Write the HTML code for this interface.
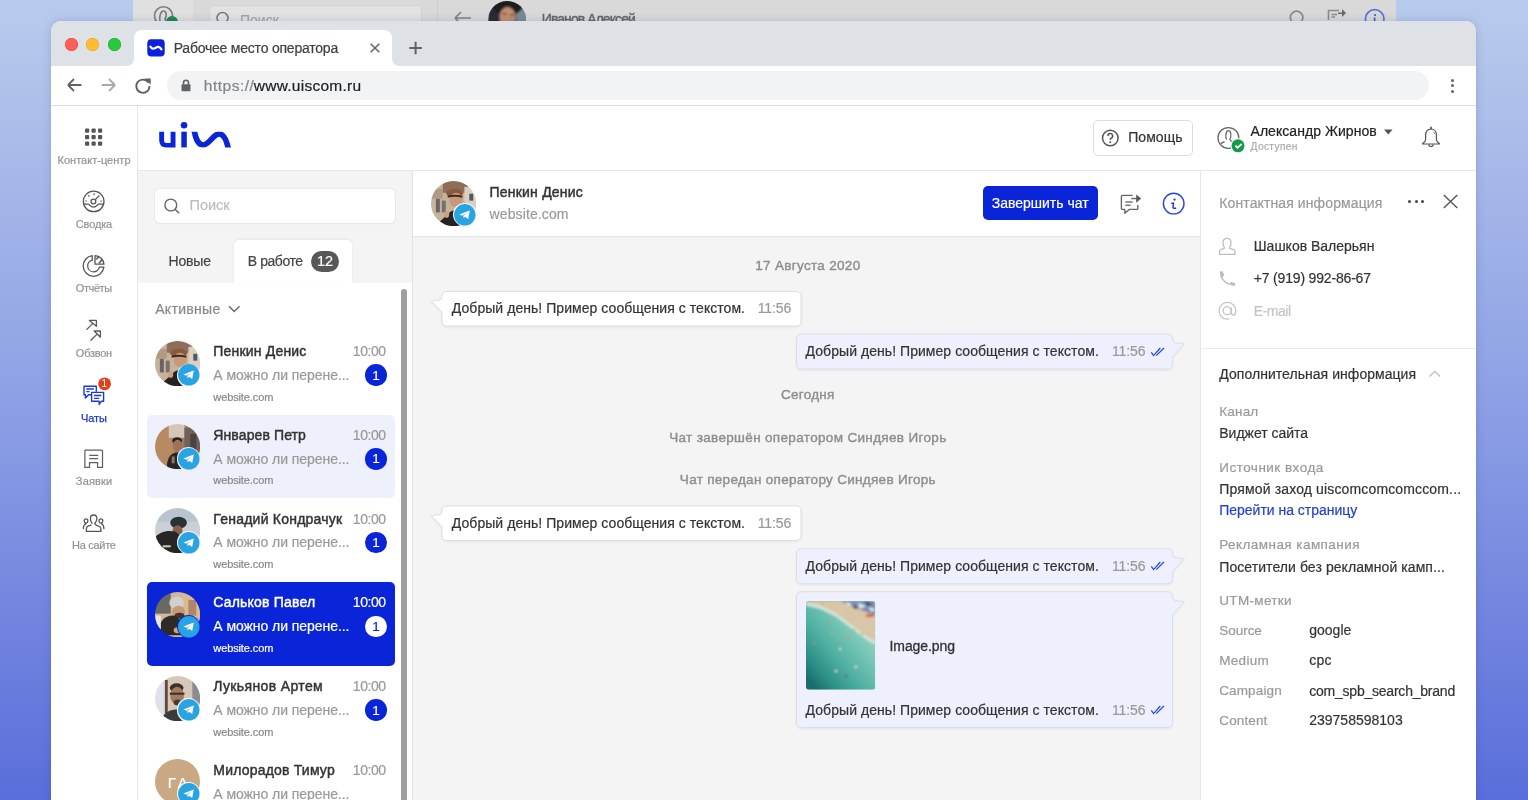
<!DOCTYPE html>
<html><head><meta charset="utf-8">
<style>
*{box-sizing:border-box;margin:0;padding:0}
html,body{width:1528px;height:800px;overflow:hidden}
body{font-family:"Liberation Sans",sans-serif;position:relative;background:#8ea3e6}
.a{position:absolute}
.t{position:absolute;white-space:nowrap;line-height:1;-webkit-text-stroke:0.2px currentColor}
</style></head><body>
<div id="root" style="position:absolute;left:0;top:0;width:1528px;height:800px;will-change:transform">
<div class="a" style="left:0px;top:0px;width:1528px;height:800px;background:linear-gradient(180deg,#b9cbec 0%,#8b9ee4 52%,#5a6edb 100%)"></div>
<div class="a" style="left:133px;top:-10px;width:1263px;height:40px;background:#d9d9d9"></div>
<div class="a" style="left:133px;top:-10px;width:60px;height:40px;background:#e0e0e0"></div>
<div class="a" style="left:209px;top:5px;width:213px;height:30px;background:#e2e2e2;border:1px solid #d2d2d2;border-radius:4px"></div>
<div class="a" style="left:437px;top:0px;width:1px;height:30px;background:#cdcdcd"></div>
<svg class="a" style="left:150px;top:3px;" width="30" height="22" viewBox="0 0 30 22"><circle cx="13.5" cy="12.7" r="9" fill="none" stroke="#7a7a7a" stroke-width="1.6"/><path d="M10 19 C9 14 10.5 8 13.5 8 C16.5 8 17 13 15 16 L18 21" fill="none" stroke="#7a7a7a" stroke-width="1.6"/><circle cx="22" cy="19" r="6" fill="#1d8a4a"/></svg>
<svg class="a" style="left:214px;top:9px;" width="20" height="20" viewBox="0 0 20 20"><circle cx="8.5" cy="9" r="5.5" fill="none" stroke="#7a7a7a" stroke-width="1.6"/></svg>
<span class="t" style="left:240.00px;top:13.15px;font-size:14px;color:#a5a5a5;">Поиск</span>
<svg class="a" style="left:450px;top:8px;" width="26" height="20" viewBox="0 0 26 20"><path d="M5 10 H21 M5 10 L11 4 M5 10 L11 16" fill="none" stroke="#808080" stroke-width="1.6"/></svg>
<svg class="a" style="left:487.5px;top:0.8px;" width="38.4" height="38.4" viewBox="0 0 38.4 38.4"><defs><clipPath id="bav"><circle cx="19.2" cy="19.2" r="19.2"/></clipPath><filter id="bavb"><feGaussianBlur stdDeviation="1"/></filter></defs><g clip-path="url(#bav)"><g filter="url(#bavb)"><rect width="38.4" height="38.4" fill="#2a2c30"/><rect x="28" y="8" width="12" height="30" fill="#7a8a98"/><ellipse cx="20" cy="6" rx="14" ry="8" fill="#1a1a1e"/><ellipse cx="19.5" cy="16" rx="8" ry="10" fill="#c08e72"/><ellipse cx="16.5" cy="13" rx="2.2" ry="1.2" fill="#8a5a44"/><ellipse cx="24" cy="14" rx="2.2" ry="1.2" fill="#8a5a44"/></g></g></svg>
<span class="t" style="left:541.80px;top:12.15px;font-size:14px;color:#666;letter-spacing:-0.935px;-webkit-text-stroke:0.4px #666;">Иванов Алексей</span>
<svg class="a" style="left:1287px;top:8px;" width="20" height="20" viewBox="0 0 20 20"><circle cx="9.6" cy="9.5" r="6.3" fill="none" stroke="#8a8a8a" stroke-width="1.7"/></svg>
<svg class="a" style="left:1326px;top:8px;" width="22" height="20" viewBox="0 0 22 20"><path d="M2.5 12 V2.5 H13 M5.5 6.5 H11 M5.5 9 H9" fill="none" stroke="#8a8a8a" stroke-width="1.6"/><path d="M12 4.5 H16 V1 L20 5 L16 9 V6 H12Z" fill="#6a6a6a"/></svg>
<svg class="a" style="left:1362px;top:7px;" width="26" height="20" viewBox="0 0 26 20"><circle cx="12.7" cy="12" r="9.3" fill="none" stroke="#5a74e0" stroke-width="1.8"/><circle cx="13" cy="8" r="1.1" fill="#3a55d0"/><path d="M12.6 10.5 V14" stroke="#3a55d0" stroke-width="1.6"/></svg>
<div class="a" style="left:51px;top:21px;width:1425px;height:800px;background:#fff;border-radius:10px 10px 0 0;box-shadow:0 0 1px rgba(30,40,110,.15),0 0 10px rgba(30,40,110,.16)"></div>
<div class="a" style="left:51px;top:21px;width:1425px;height:45px;background:#dee1e6;border-radius:10px 10px 0 0"></div>
<div class="a" style="left:64.5px;top:38px;width:13px;height:13px;border-radius:50%;background:#fe5f57;box-shadow:inset 0 0 0 .5px #e0443e"></div>
<div class="a" style="left:86.0px;top:38px;width:13px;height:13px;border-radius:50%;background:#febc2e;box-shadow:inset 0 0 0 .5px #dea123"></div>
<div class="a" style="left:107.5px;top:38px;width:13px;height:13px;border-radius:50%;background:#28c840;box-shadow:inset 0 0 0 .5px #1aab29"></div>
<div class="a" style="left:134px;top:29.5px;width:258px;height:37px;background:#fff;border-radius:8px 8px 0 0"></div>
<svg class="a" style="left:126px;top:58px;" width="8" height="8" viewBox="0 0 8 8"><path d="M0 8 Q8 8 8 0 V8 Z" fill="#fff"/></svg>
<svg class="a" style="left:392px;top:58px;" width="8" height="8" viewBox="0 0 8 8"><path d="M8 8 Q0 8 0 0 V8 Z" fill="#fff"/></svg>
<svg class="a" style="left:147px;top:39px;" width="18" height="18" viewBox="0 0 18 18"><rect x="0.3" y="0.2" width="17.4" height="17.3" rx="4" fill="#0a22e0"/><path d="M3.4 7.6 C4.5 9.5 6 10 7.5 9.4 C9 8.7 10 7.6 11.5 7.9 C13 8.2 13.8 9.2 14.5 10.4" fill="none" stroke="#fff" stroke-width="2.1" stroke-linecap="round"/></svg>
<span class="t" style="left:173.70px;top:41.15px;font-size:14px;color:#3c4043;letter-spacing:-0.218px;">Рабочее место оператора</span>
<svg class="a" style="left:368px;top:41px;" width="14" height="14" viewBox="0 0 14 14"><path d="M2.7 2.7 L11.3 11.3 M11.3 2.7 L2.7 11.3" stroke="#5f6368" stroke-width="1.5"/></svg>
<svg class="a" style="left:407px;top:40px;" width="17" height="17" viewBox="0 0 17 17"><path d="M8.6 1.7 V14.2 M2.3 8 H14.9" stroke="#5f6368" stroke-width="2"/></svg>
<svg class="a" style="left:64px;top:76px;" width="20" height="18" viewBox="0 0 20 18"><path d="M4 9 H17.5 M4 9 L10 3 M4 9 L10 15" fill="none" stroke="#5f6368" stroke-width="1.8"/></svg>
<svg class="a" style="left:99px;top:76px;" width="20" height="18" viewBox="0 0 20 18"><path d="M2.7 9 H16 M16 9 L10 3 M16 9 L10 15" fill="none" stroke="#a6a9ad" stroke-width="1.8"/></svg>
<svg class="a" style="left:133px;top:75px;" width="20" height="20" viewBox="0 0 20 20"><path d="M15.4 7.5 A6.6 6.6 0 1 0 16.5 11" fill="none" stroke="#5f6368" stroke-width="1.8"/><path d="M11.5 3.5 H17.7 V9.7 Z" fill="#5f6368"/></svg>
<div class="a" style="left:167px;top:70.7px;width:1262px;height:29.5px;background:#f1f3f4;border-radius:15px"></div>
<svg class="a" style="left:180px;top:78px;" width="12" height="14" viewBox="0 0 12 14"><path d="M3.5 6.5 V4.8 A2.5 2.5 0 0 1 8.5 4.8 V6.5" fill="none" stroke="#5f6368" stroke-width="1.6"/><rect x="1.5" y="6.3" width="9" height="7" rx="1" fill="#5f6368"/></svg>
<span class="t" style="left:203.80px;top:77.88px;font-size:15.5px;color:#80868b;letter-spacing:0.497px;">https://</span>
<span class="t" style="left:253.80px;top:77.88px;font-size:15.5px;color:#202124;letter-spacing:0.257px;">www.uiscom.ru</span>
<div class="a" style="left:1451.2px;top:78.7px;width:3.2px;height:3.2px;border-radius:50%;background:#5f6368"></div>
<div class="a" style="left:1451.2px;top:84.05000000000001px;width:3.2px;height:3.2px;border-radius:50%;background:#5f6368"></div>
<div class="a" style="left:1451.2px;top:89.5px;width:3.2px;height:3.2px;border-radius:50%;background:#5f6368"></div>
<div class="a" style="left:51px;top:105px;width:1425px;height:1px;background:#dadce0"></div>
<div class="a" style="left:137px;top:106px;width:1px;height:700px;background:#e6e6e6"></div>
<div class="a" style="left:138px;top:170px;width:1338px;height:1px;background:#e8e8e8"></div>
<svg class="a" style="left:155px;top:118px;" width="80" height="34" viewBox="0 0 80 34"><g fill="#0a25d8" transform="translate(-155,-118)"><path d="M159.2 131.7 H164.1 V141 Q164.1 143.1 166.3 143.1 H170.6 V131.7 H175.5 V147.4 H166.6 Q159.2 147.4 159.2 140.2 Z"/><rect x="181.3" y="131.7" width="5.5" height="15.7"/><circle cx="184.05" cy="125.2" r="3.3"/></g><g transform="translate(-155,-118)"><clipPath id="lc"><rect x="150" y="131.7" width="90" height="15.7"/></clipPath><path clip-path="url(#lc)" d="M193.8 129 C195.6 138 197.5 145 203 145 C208.8 145 213.6 133.9 219 133.9 C224.5 133.9 227 142 228.6 150" fill="none" stroke="#0a25d8" stroke-width="5.6"/></g></svg>
<div class="a" style="left:1092.5px;top:120px;width:100px;height:36px;border:1px solid #dcdcdc;border-radius:5px;background:#fff"></div>
<svg class="a" style="left:1100px;top:128px;" width="21" height="21" viewBox="0 0 21 21"><circle cx="10.3" cy="10" r="7.8" fill="none" stroke="#555" stroke-width="1.5"/><path d="M7.9 8 A2.4 2.4 0 1 1 11.2 10.2 C10.4 10.6 10.3 11 10.3 12" fill="none" stroke="#555" stroke-width="1.5"/><circle cx="10.3" cy="14.3" r="1" fill="#555"/></svg>
<span class="t" style="left:1128.20px;top:130.45px;font-size:14px;color:#333;letter-spacing:0.046px;">Помощь</span>
<svg class="a" style="left:1216px;top:125px;" width="32" height="30" viewBox="0 0 32 30"><circle cx="12.4" cy="12.9" r="10.4" fill="none" stroke="#666" stroke-width="1.25"/><path d="M10.6 14.6 C9.4 12.5 9.4 5.6 12.3 5.6 C15.2 5.6 15.6 11.5 13.8 14.5 C14.5 15.5 15.5 16.3 17 17" fill="none" stroke="#666" stroke-width="1.25"/><path d="M8.6 16.6 C7.2 17 5.6 17.8 4.8 19" fill="none" stroke="#666" stroke-width="1.25"/><circle cx="22" cy="20.8" r="7.6" fill="#fff"/><circle cx="22" cy="20.8" r="6.5" fill="#15994a"/><path d="M19.4 20.6 L21.6 22.8 L25.7 18.8" fill="none" stroke="#fff" stroke-width="1.8"/></svg>
<span class="t" style="left:1250.50px;top:124.05px;font-size:14px;color:#222;letter-spacing:0.052px;">Александр Жирнов</span>
<svg class="a" style="left:1382px;top:127px;" width="12" height="9" viewBox="0 0 12 9"><path d="M2 2.4 H10.6 L6.3 7.4 Z" fill="#555"/></svg>
<span class="t" style="left:1250.50px;top:141.67px;font-size:10.2px;color:#aaa;letter-spacing:0.363px;">Доступен</span>
<svg class="a" style="left:1419px;top:124px;" width="24" height="28" viewBox="0 0 24 28"><path d="M12 5 C8.2 5 6.6 8 6.6 11 V15.6 C6.6 17.4 5.2 18.6 3.5 19.8 V20 H20.5 V19.8 C18.8 18.6 17.4 17.4 17.4 15.6 V11 C17.4 8 15.8 5 12 5 Z" fill="none" stroke="#555" stroke-width="1.2" stroke-linejoin="round"/><path d="M9.8 20.3 A2.2 2.2 0 0 0 14.2 20.3" fill="none" stroke="#555" stroke-width="1.2"/><path d="M12 3.4 V5" stroke="#555" stroke-width="1.6" stroke-linecap="round"/><path d="M13.8 7.2 C15 7.8 15.6 9 15.7 10.2" fill="none" stroke="#888" stroke-width="0.9"/></svg>
<svg class="a" style="left:0px;top:0px;" width="160" height="160" viewBox="0 0 160 160"><rect x="85.00" y="128.50" width="4.2" height="4.2" rx="1" fill="#555"/><rect x="91.50" y="128.50" width="4.2" height="4.2" rx="1" fill="#555"/><rect x="98.00" y="128.50" width="4.2" height="4.2" rx="1" fill="#555"/><rect x="85.00" y="135.00" width="4.2" height="4.2" rx="1" fill="#555"/><rect x="91.50" y="135.00" width="4.2" height="4.2" rx="1" fill="#555"/><rect x="98.00" y="135.00" width="4.2" height="4.2" rx="1" fill="#555"/><rect x="85.00" y="141.50" width="4.2" height="4.2" rx="1" fill="#555"/><rect x="91.50" y="141.50" width="4.2" height="4.2" rx="1" fill="#555"/><rect x="98.00" y="141.50" width="4.2" height="4.2" rx="1" fill="#555"/></svg>
<span class="t" style="left:57.50px;top:154.94px;font-size:11px;color:#939393;letter-spacing:0.017px;">Контакт-центр</span>
<svg class="a" style="left:80px;top:189px;" width="28" height="28" viewBox="0 0 28 28"><g transform="translate(-80,-189)" fill="none" stroke="#555" stroke-width="1.3"><circle cx="93.67" cy="201.4" r="10.3"/><path d="M83.5 204.1 H88.2 C89.5 204.1 90.3 207.1 93.5 207.1 C96.7 207.1 97.5 204.1 98.8 204.1 H103.8"/><circle cx="93.4" cy="201.5" r="2.4"/><path d="M95.3 199.6 L99.4 195.4"/><path d="M85.3 201 H86.9 M88.3 195.3 L89.4 196.5 M94.1 193.3 V194.9 M100.3 201 H101.9" stroke-width="1.2"/></g></svg>
<span class="t" style="left:75.85px;top:219.44px;font-size:11px;color:#939393;letter-spacing:-0.166px;">Сводка</span>
<svg class="a" style="left:80px;top:252px;" width="28" height="28" viewBox="0 0 28 28"><g transform="translate(-80,-252)" fill="none" stroke="#555" stroke-width="1.3" stroke-linejoin="round"><path d="M92.2 255.6 A10.4 10.4 0 1 0 103.9 267.2 H99.35 A5.9 5.9 0 1 1 92.2 260.2 Z"/><path d="M95 255.6 A9.4 9.4 0 0 1 104 264.2 H95 Z"/><path d="M96.3 259.6 L98.9 256.6 M99 263.2 L102.4 259.2" stroke-width="1.5"/></g></svg>
<span class="t" style="left:75.85px;top:283.19px;font-size:11px;color:#939393;letter-spacing:-0.417px;">Отчёты</span>
<svg class="a" style="left:80px;top:316px;" width="28" height="28" viewBox="0 0 28 28"><g transform="translate(-80,-316)" fill="none" stroke="#5a5a5a" stroke-width="1.3" stroke-linejoin="round" stroke-linecap="round"><path d="M89.4 320.4 H96.4 V326.3 Z M86.8 329.4 L92.7 323.6"/><path d="M94.2 331 H100.4 V337.2 Z M90.9 340.3 L97.1 334.1"/></g></svg>
<span class="t" style="left:75.85px;top:347.69px;font-size:11px;color:#939393;letter-spacing:-0.254px;">Обзвон</span>
<svg class="a" style="left:80px;top:376px;" width="32" height="32" viewBox="0 0 32 32"><g transform="translate(-80,-376)" fill="none" stroke="#1a3ad0" stroke-width="1.4" stroke-linejoin="round"><path d="M96.3 391.8 V386.3 H84 V394.7 H85.4 V398 L88.6 394.7 H91.5"/><path d="M86.3 389 H93.8 M86.3 391.6 H89.5"/><path d="M91.6 392.4 H103.6 V401.3 H101.3 L99.2 404.4 V401.3 H91.6 Z" fill="#fff"/><path d="M94 395.5 H101.3 M94 398.4 H99.2"/></g><circle cx="24.6" cy="7.8" r="6.4" fill="#e0411b"/><text x="24.4" y="11.4" font-family="Liberation Sans" font-size="10" fill="#fff" text-anchor="middle">1</text></svg>
<span class="t" style="left:81.00px;top:412.69px;font-size:11px;color:#1a3ad0;letter-spacing:-0.051px;-webkit-text-stroke:0.25px #1a3ad0;">Чаты</span>
<svg class="a" style="left:80px;top:446px;" width="28" height="28" viewBox="0 0 28 28"><g transform="translate(-80,-446)" fill="none" stroke="#606060" stroke-width="1.25"><path d="M86 450 H101.5 A1 1 0 0 1 102.5 451 V467.3 H97.6 V462.5 H89.5 V467.3 H84.9 V451 A1 1 0 0 1 86 450 Z"/><path d="M89.2 455.3 H98.2 M89.2 458.5 H98.2"/></g></svg>
<span class="t" style="left:75.85px;top:475.99px;font-size:11px;color:#939393;letter-spacing:0.156px;">Заявки</span>
<svg class="a" style="left:78px;top:510px;" width="32" height="26" viewBox="0 0 32 26"><g transform="translate(-78,-510)" fill="none" stroke="#555" stroke-width="1.3" stroke-linecap="round" stroke-linejoin="round"><path d="M92 523.3 C90.8 522 90.4 520 90.4 518.5 C90.4 516.3 91.6 515 93.6 515 C95.7 515 96.9 516.4 96.9 518.6 C96.9 520.5 96 522.3 94.7 523.5 C95.2 524.8 96.5 525.5 98.6 526.1 C100 526.5 100.9 527.2 100.9 528.4 V531.4 H86.4 V528.4 C86.4 527 87.3 526.3 88.6 525.9 C89.5 525.6 90.3 525.4 91 525.2"/><path d="M85.3 522.9 C84.5 522.4 84.2 521.6 84.2 520.7 C84.2 519.5 85 518.8 86.1 518.8 C87.2 518.8 87.9 519.5 87.9 520.7 C87.9 521.7 87.3 522.6 86.3 523.2 C84.6 524.2 83.3 526 83.3 528.6"/><path d="M100.1 522.9 C99.3 522.4 99 521.6 99 520.7 C99 519.5 99.8 518.8 100.9 518.8 C102 518.8 102.8 519.5 102.8 520.7 C102.8 521.7 102.2 522.6 101.2 523.2 C102.8 524.2 103.9 526 103.9 528.6"/></g></svg>
<span class="t" style="left:72.05px;top:539.99px;font-size:11px;color:#939393;letter-spacing:-0.287px;">На сайте</span>
<div class="a" style="left:138px;top:171px;width:274px;height:112px;background:#f4f4f4"></div>
<div class="a" style="left:412px;top:171px;width:1px;height:630px;background:#e4e4e4"></div>
<div class="a" style="left:155px;top:188.5px;width:240.3px;height:34.8px;background:#fff;border-radius:5px;box-shadow:0 0 0 1px #e9e9e9,0 1px 2px rgba(0,0,0,.05)"></div>
<svg class="a" style="left:160px;top:194px;" width="24" height="24" viewBox="0 0 24 24"><circle cx="10.8" cy="11" r="5.9" fill="none" stroke="#666" stroke-width="1.4"/><path d="M15 15.2 L19.3 19.3" stroke="#666" stroke-width="1.5"/></svg>
<span class="t" style="left:189.50px;top:197.63px;font-size:14.5px;color:#bdbdbd;letter-spacing:-0.045px;">Поиск</span>
<span class="t" style="left:168.40px;top:253.95px;font-size:14px;color:#444;letter-spacing:-0.121px;">Новые</span>
<div class="a" style="left:234px;top:239.8px;width:118.2px;height:44px;background:#fff;border-radius:5px 5px 0 0;box-shadow:0 -1px 3px rgba(0,0,0,.06)"></div>
<span class="t" style="left:247.80px;top:253.95px;font-size:14px;color:#444;letter-spacing:-0.434px;">В работе</span>
<div class="a" style="left:310.6px;top:250.6px;width:28.8px;height:21.6px;background:#575757;border-radius:11px"></div>
<span class="t" style="left:317.00px;top:254.33px;font-size:14.5px;color:#fff;letter-spacing:-0.128px;">12</span>
<div class="a" style="left:401px;top:289px;width:6px;height:520px;background:#9e9e9e;border-radius:3px"></div>
<span class="t" style="left:155.20px;top:301.65px;font-size:14px;color:#888;letter-spacing:0.304px;">Активные</span>
<svg class="a" style="left:226px;top:302px;" width="16" height="12" viewBox="0 0 16 12"><path d="M3 4.2 L8.25 9.4 L13.5 4.2" fill="none" stroke="#666" stroke-width="1.4"/></svg>
<svg class="a" style="left:155.10px;top:340.70px" width="45.2" height="45.2" viewBox="0 0 46 46"><defs><clipPath id="av0_155_340"><circle cx="23" cy="23" r="23"/></clipPath><filter id="bl0_155_340" x="-10%" y="-10%" width="120%" height="120%"><feGaussianBlur stdDeviation="0.6"/></filter></defs><g clip-path="url(#av0_155_340)"><g filter="url(#bl0_155_340)"><rect width="46" height="46" fill="#c6b49a"/><rect x="12" y="0" width="26" height="12" fill="#8e6e58"/><rect x="34" y="6" width="12" height="34" fill="#dccfc2"/><rect x="39" y="13" width="4" height="7" fill="#4a5a66"/><rect x="5" y="18" width="4" height="14" fill="#6a6468"/><rect x="11" y="20" width="4" height="12" fill="#76706e"/><rect x="0" y="8" width="12" height="10" fill="#b09a84"/><ellipse cx="24" cy="12.5" rx="8.5" ry="4.5" fill="#8a5a3c"/><ellipse cx="25.5" cy="19.5" rx="6.5" ry="7.5" fill="#c8987a"/><path d="M17 15 Q24 13 32 15 L32 17 Q24 15 17 17 Z" fill="#3a2a22"/><path d="M4 46 L20 31 L28 28 L32 31 L36 46 Z" fill="#262424"/><ellipse cx="16" cy="34" rx="2.5" ry="3.5" fill="#d0a080"/></g></g></svg>
<div class="a" style="left:177.10px;top:363.50px;width:23.4px;height:23.4px;border-radius:50%;background:#fff"></div>
<svg class="a" style="left:178px;top:364.4px;" width="22" height="22" viewBox="0 0 22 22"><circle cx="10.8" cy="10.8" r="10.75" fill="#2aa3e3"/><path d="M5.3 10.6 L15.8 6.4 L14.2 15 L11 12.7 L9.5 14.2 L9.4 12 L13.9 8.2 L8.5 11.7 Z" fill="#fff"/></svg>
<span class="t" style="left:213.30px;top:344.25px;font-size:14px;color:#333;letter-spacing:0.185px;-webkit-text-stroke:0.45px #333;">Пенкин Денис</span>
<span class="t" style="left:352.80px;top:344.25px;font-size:14px;color:#999;letter-spacing:-0.434px;">10:00</span>
<span class="t" style="left:213.30px;top:368.05px;font-size:14px;color:#999;letter-spacing:-0.056px;">А можно ли перене...</span>
<div class="a" style="left:365.20px;top:364.40px;width:21.6px;height:21.6px;border-radius:50%;background:#0a25d8"></div>
<span class="t" style="left:372.25px;top:368.77px;font-size:13.5px;color:#fff;">1</span>
<span class="t" style="left:213.30px;top:391.79px;font-size:11px;color:#888;letter-spacing:-0.113px;">website.com</span>
<div class="a" style="left:146.6px;top:414.49999999999994px;width:248.7px;height:83.2px;background:#eef0fb;border-radius:5px"></div>
<svg class="a" style="left:155.10px;top:424.40px" width="45.2" height="45.2" viewBox="0 0 46 46"><defs><clipPath id="av1_155_424"><circle cx="23" cy="23" r="23"/></clipPath><filter id="bl1_155_424" x="-10%" y="-10%" width="120%" height="120%"><feGaussianBlur stdDeviation="0.6"/></filter></defs><g clip-path="url(#av1_155_424)"><g filter="url(#bl1_155_424)"><rect width="46" height="46" fill="#9a7a62"/><rect x="0" y="0" width="20" height="46" fill="#b88a62"/><rect x="14" y="0" width="16" height="14" fill="#d4c6b8"/><rect x="30" y="4" width="16" height="40" fill="#6e6258"/><rect x="36" y="10" width="6" height="30" fill="#4a4240"/><ellipse cx="22.5" cy="17" rx="5" ry="3.5" fill="#2a2020"/><ellipse cx="23" cy="22" rx="4.8" ry="6" fill="#a27258"/><path d="M12 46 C12 34 16 29 23 29 C30 29 33 34 33 46 Z" fill="#262626"/><rect x="17" y="33" width="3" height="7" fill="#9a7050"/></g></g></svg>
<div class="a" style="left:177.10px;top:447.20px;width:23.4px;height:23.4px;border-radius:50%;background:#eef0fb"></div>
<svg class="a" style="left:178px;top:448.1px;" width="22" height="22" viewBox="0 0 22 22"><circle cx="10.8" cy="10.8" r="10.75" fill="#2aa3e3"/><path d="M5.3 10.6 L15.8 6.4 L14.2 15 L11 12.7 L9.5 14.2 L9.4 12 L13.9 8.2 L8.5 11.7 Z" fill="#fff"/></svg>
<span class="t" style="left:213.30px;top:427.95px;font-size:14px;color:#333;letter-spacing:0.110px;-webkit-text-stroke:0.45px #333;">Январев Петр</span>
<span class="t" style="left:352.80px;top:427.95px;font-size:14px;color:#999;letter-spacing:-0.434px;">10:00</span>
<span class="t" style="left:213.30px;top:451.75px;font-size:14px;color:#999;letter-spacing:-0.056px;">А можно ли перене...</span>
<div class="a" style="left:365.20px;top:448.10px;width:21.6px;height:21.6px;border-radius:50%;background:#0a25d8"></div>
<span class="t" style="left:372.25px;top:452.47px;font-size:13.5px;color:#fff;">1</span>
<span class="t" style="left:213.30px;top:475.49px;font-size:11px;color:#888;letter-spacing:-0.113px;">website.com</span>
<svg class="a" style="left:155.10px;top:508.10px" width="45.2" height="45.2" viewBox="0 0 46 46"><defs><clipPath id="av2_155_508"><circle cx="23" cy="23" r="23"/></clipPath><filter id="bl2_155_508" x="-10%" y="-10%" width="120%" height="120%"><feGaussianBlur stdDeviation="0.6"/></filter></defs><g clip-path="url(#av2_155_508)"><g filter="url(#bl2_155_508)"><rect width="46" height="46" fill="#c9d0d6"/><rect x="0" y="0" width="46" height="14" fill="#b8c4cf"/><ellipse cx="24" cy="15" rx="8.5" ry="6" fill="#2c3034"/><ellipse cx="23" cy="23" rx="5" ry="5.5" fill="#8a6048"/><path d="M0 46 V30 C4 25 12 22 20 24 C26 26 28 34 28 46 Z" fill="#262626"/><rect x="8" y="38" width="8" height="2" fill="#d8d0b8"/></g></g></svg>
<div class="a" style="left:177.10px;top:530.90px;width:23.4px;height:23.4px;border-radius:50%;background:#fff"></div>
<svg class="a" style="left:178px;top:531.8px;" width="22" height="22" viewBox="0 0 22 22"><circle cx="10.8" cy="10.8" r="10.75" fill="#2aa3e3"/><path d="M5.3 10.6 L15.8 6.4 L14.2 15 L11 12.7 L9.5 14.2 L9.4 12 L13.9 8.2 L8.5 11.7 Z" fill="#fff"/></svg>
<span class="t" style="left:213.30px;top:511.65px;font-size:14px;color:#333;letter-spacing:0.233px;-webkit-text-stroke:0.45px #333;">Генадий Кондрачук</span>
<span class="t" style="left:352.80px;top:511.65px;font-size:14px;color:#999;letter-spacing:-0.434px;">10:00</span>
<span class="t" style="left:213.30px;top:535.45px;font-size:14px;color:#999;letter-spacing:-0.056px;">А можно ли перене...</span>
<div class="a" style="left:365.20px;top:531.80px;width:21.6px;height:21.6px;border-radius:50%;background:#0a25d8"></div>
<span class="t" style="left:372.25px;top:536.17px;font-size:13.5px;color:#fff;">1</span>
<span class="t" style="left:213.30px;top:559.19px;font-size:11px;color:#888;letter-spacing:-0.113px;">website.com</span>
<div class="a" style="left:146.6px;top:582.2px;width:248.7px;height:83.6px;background:#0a25d8;border-radius:5px"></div>
<svg class="a" style="left:155.10px;top:591.80px" width="45.2" height="45.2" viewBox="0 0 46 46"><defs><clipPath id="av3_155_591"><circle cx="23" cy="23" r="23"/></clipPath><filter id="bl3_155_591" x="-10%" y="-10%" width="120%" height="120%"><feGaussianBlur stdDeviation="0.6"/></filter></defs><g clip-path="url(#av3_155_591)"><g filter="url(#bl3_155_591)"><rect width="46" height="46" fill="#d2b894"/><rect x="0" y="0" width="16" height="22" fill="#6a6864"/><rect x="28" y="0" width="18" height="46" fill="#d9bb92"/><rect x="34" y="8" width="8" height="16" fill="#b0866a"/><ellipse cx="22" cy="11" rx="7.5" ry="6.5" fill="#cfd0d0"/><ellipse cx="24" cy="20" rx="6.5" ry="6" fill="#c49878"/><ellipse cx="25" cy="24" rx="5" ry="3" fill="#4a3428"/><path d="M3 44 C3 30 10 24 18 24 C24 24 28 30 28 44 Z" fill="#2e2a28"/><ellipse cx="23" cy="39" rx="4" ry="3" fill="#d0a080"/><rect x="0" y="24" width="6" height="14" fill="#e8e4e0"/></g></g></svg>
<div class="a" style="left:177.10px;top:614.60px;width:23.4px;height:23.4px;border-radius:50%;background:#0a25d8"></div>
<svg class="a" style="left:178px;top:615.5px;" width="22" height="22" viewBox="0 0 22 22"><circle cx="10.8" cy="10.8" r="10.75" fill="#2aa3e3"/><path d="M5.3 10.6 L15.8 6.4 L14.2 15 L11 12.7 L9.5 14.2 L9.4 12 L13.9 8.2 L8.5 11.7 Z" fill="#fff"/></svg>
<span class="t" style="left:213.30px;top:595.35px;font-size:14px;color:#fff;letter-spacing:0.197px;-webkit-text-stroke:0.45px #fff;">Сальков Павел</span>
<span class="t" style="left:352.80px;top:595.35px;font-size:14px;color:#fff;letter-spacing:-0.434px;">10:00</span>
<span class="t" style="left:213.30px;top:619.15px;font-size:14px;color:#fff;letter-spacing:-0.056px;">А можно ли перене...</span>
<div class="a" style="left:365.20px;top:615.50px;width:21.6px;height:21.6px;border-radius:50%;background:#fff"></div>
<span class="t" style="left:372.25px;top:619.87px;font-size:13.5px;color:#0a25d8;">1</span>
<span class="t" style="left:213.30px;top:642.89px;font-size:11px;color:#fff;letter-spacing:-0.113px;">website.com</span>
<svg class="a" style="left:155.10px;top:675.50px" width="45.2" height="45.2" viewBox="0 0 46 46"><defs><clipPath id="av4_155_675"><circle cx="23" cy="23" r="23"/></clipPath><filter id="bl4_155_675" x="-10%" y="-10%" width="120%" height="120%"><feGaussianBlur stdDeviation="0.6"/></filter></defs><g clip-path="url(#av4_155_675)"><g filter="url(#bl4_155_675)"><rect width="46" height="46" fill="#d6c8b8"/><rect x="0" y="0" width="12" height="46" fill="#dfe2ea"/><rect x="10" y="4" width="3" height="34" fill="#6a4a3a"/><rect x="38" y="6" width="8" height="32" fill="#8a8c90"/><ellipse cx="22" cy="12" rx="7" ry="4.5" fill="#3a302a"/><ellipse cx="22.5" cy="20" rx="7" ry="9" fill="#a47a60"/><rect x="15" y="17" width="15" height="2" fill="#3a2e28"/><ellipse cx="23" cy="27" rx="4" ry="3" fill="#4a3a30"/><path d="M6 46 C8 38 14 34 22 34 C30 34 36 38 38 46 Z" fill="#3a3a3a"/></g></g></svg>
<div class="a" style="left:177.10px;top:698.30px;width:23.4px;height:23.4px;border-radius:50%;background:#fff"></div>
<svg class="a" style="left:178px;top:699.2px;" width="22" height="22" viewBox="0 0 22 22"><circle cx="10.8" cy="10.8" r="10.75" fill="#2aa3e3"/><path d="M5.3 10.6 L15.8 6.4 L14.2 15 L11 12.7 L9.5 14.2 L9.4 12 L13.9 8.2 L8.5 11.7 Z" fill="#fff"/></svg>
<span class="t" style="left:213.30px;top:679.05px;font-size:14px;color:#333;letter-spacing:0.364px;-webkit-text-stroke:0.45px #333;">Лукьянов Артем</span>
<span class="t" style="left:352.80px;top:679.05px;font-size:14px;color:#999;letter-spacing:-0.434px;">10:00</span>
<span class="t" style="left:213.30px;top:702.85px;font-size:14px;color:#999;letter-spacing:-0.056px;">А можно ли перене...</span>
<div class="a" style="left:365.20px;top:699.20px;width:21.6px;height:21.6px;border-radius:50%;background:#0a25d8"></div>
<span class="t" style="left:372.25px;top:703.57px;font-size:13.5px;color:#fff;">1</span>
<span class="t" style="left:213.30px;top:726.59px;font-size:11px;color:#888;letter-spacing:-0.113px;">website.com</span>
<div class="a" style="left:155.1px;top:759.20px;width:45.2px;height:45.2px;border-radius:50%;background:#c9a883"></div>
<span class="t" style="left:167.70px;top:774.60px;font-size:15px;color:#fff;letter-spacing:2.876px;">ГА</span>
<div class="a" style="left:177.10px;top:782.00px;width:23.4px;height:23.4px;border-radius:50%;background:#fff"></div>
<svg class="a" style="left:178px;top:782.9px;" width="22" height="22" viewBox="0 0 22 22"><circle cx="10.8" cy="10.8" r="10.75" fill="#2aa3e3"/><path d="M5.3 10.6 L15.8 6.4 L14.2 15 L11 12.7 L9.5 14.2 L9.4 12 L13.9 8.2 L8.5 11.7 Z" fill="#fff"/></svg>
<span class="t" style="left:213.30px;top:762.75px;font-size:14px;color:#333;letter-spacing:0.199px;-webkit-text-stroke:0.45px #333;">Милорадов Тимур</span>
<span class="t" style="left:352.80px;top:762.75px;font-size:14px;color:#999;letter-spacing:-0.434px;">10:00</span>
<span class="t" style="left:213.30px;top:786.55px;font-size:14px;color:#999;letter-spacing:-0.056px;">А можно ли перене...</span>
<div class="a" style="left:413px;top:236px;width:788px;height:570px;background:#f4f4f4"></div>
<div class="a" style="left:413px;top:171px;width:788px;height:65px;background:#fff;box-shadow:0 1px 0 #e6e6e6,0 1px 3px rgba(0,0,0,.05)"></div>
<div class="a" style="left:1201px;top:171px;width:275px;height:630px;background:#fff;box-shadow:-1px 0 0 #e6e6e6"></div>
<svg class="a" style="left:431.00px;top:181.00px" width="45.2" height="45.2" viewBox="0 0 46 46"><defs><clipPath id="av0_431_181"><circle cx="23" cy="23" r="23"/></clipPath><filter id="bl0_431_181" x="-10%" y="-10%" width="120%" height="120%"><feGaussianBlur stdDeviation="0.6"/></filter></defs><g clip-path="url(#av0_431_181)"><g filter="url(#bl0_431_181)"><rect width="46" height="46" fill="#c6b49a"/><rect x="12" y="0" width="26" height="12" fill="#8e6e58"/><rect x="34" y="6" width="12" height="34" fill="#dccfc2"/><rect x="39" y="13" width="4" height="7" fill="#4a5a66"/><rect x="5" y="18" width="4" height="14" fill="#6a6468"/><rect x="11" y="20" width="4" height="12" fill="#76706e"/><rect x="0" y="8" width="12" height="10" fill="#b09a84"/><ellipse cx="24" cy="12.5" rx="8.5" ry="4.5" fill="#8a5a3c"/><ellipse cx="25.5" cy="19.5" rx="6.5" ry="7.5" fill="#c8987a"/><path d="M17 15 Q24 13 32 15 L32 17 Q24 15 17 17 Z" fill="#3a2a22"/><path d="M4 46 L20 31 L28 28 L32 31 L36 46 Z" fill="#262424"/><ellipse cx="16" cy="34" rx="2.5" ry="3.5" fill="#d0a080"/></g></g></svg>
<div class="a" style="left:452.9px;top:203.1px;width:23.4px;height:23.4px;border-radius:50%;background:#fff"></div>
<svg class="a" style="left:453.8px;top:204px;" width="22" height="22" viewBox="0 0 22 22"><circle cx="10.8" cy="10.8" r="10.75" fill="#2aa3e3"/><path d="M5.3 10.6 L15.8 6.4 L14.2 15 L11 12.7 L9.5 14.2 L9.4 12 L13.9 8.2 L8.5 11.7 Z" fill="#fff"/></svg>
<span class="t" style="left:489.50px;top:185.15px;font-size:14px;color:#333;letter-spacing:0.212px;-webkit-text-stroke:0.45px #333;">Пенкин Денис</span>
<span class="t" style="left:489.50px;top:206.95px;font-size:14px;color:#999;letter-spacing:0.119px;">website.com</span>
<div class="a" style="left:982.6px;top:186.3px;width:115.9px;height:34.2px;background:#0a25d8;border-radius:5px"></div>
<span class="t" style="left:991.70px;top:196.15px;font-size:14px;color:#fff;">Завершить чат</span>
<svg class="a" style="left:1115px;top:188px;" width="32" height="30" viewBox="0 0 32 30"><g transform="translate(-1115,-188)"><path d="M1132.7 195.4 H1122.4 A1 1 0 0 0 1121.4 196.4 V208.4 A1 1 0 0 0 1122.4 209.4 H1124.8 V213.3 L1129.2 209.4 H1136.8 A1 1 0 0 0 1137.8 208.4 V205" fill="none" stroke="#666" stroke-width="1.4" stroke-linejoin="round"/><path d="M1125.3 202 H1132.7 M1125.3 205.2 H1130.6" stroke="#777" stroke-width="1.4"/><path d="M1131.2 198.55 H1136.5" stroke="#666" stroke-width="1.4"/><path d="M1136.2 194.4 L1141.1 198.55 L1136.2 202.7 Z" fill="#555"/></g></svg>
<svg class="a" style="left:1160px;top:190px;" width="28" height="28" viewBox="0 0 28 28"><g transform="translate(-1160,-190)"><circle cx="1173.7" cy="203.6" r="10.3" fill="none" stroke="#2b45d6" stroke-width="1.4"/><circle cx="1174.5" cy="199.6" r="1.15" fill="#1a36d0"/><path d="M1171.8 203.2 H1173.6 L1172.9 207.3 Q1172.8 208.4 1175.6 208.2" fill="none" stroke="#1a36d0" stroke-width="1.4" stroke-linecap="round" stroke-linejoin="round"/></g></svg>
<svg class="a" style="left:0;top:0;filter:drop-shadow(0 1px 1px rgba(0,0,0,.06))" width="1528" height="800" viewBox="0 0 1528 800"><path d="M447 291.4 H796 Q801 291.4 801 296.4 V321.0 Q801 326.0 796 326.0 H447 Q442 326.0 442 321.0 V311.9 L431.2 301.0 L439 300.29999999999995 Q442 300.0 442 296.4 Q442 291.4 447 291.4 Z" fill="#fff" stroke="#dedede" stroke-width="1"/><path d="M801.5 334 H1167.5 Q1172.5 334 1172.5 339 Q1172.5 342.6 1175.5 342.9 L1184.1 343.8 L1172.5 357 V364 Q1172.5 369 1167.5 369 H801.5 Q796.5 369 796.5 364 V339 Q796.5 334 801.5 334 Z" fill="#eef0fd" stroke="#dcdde6" stroke-width="1"/><path d="M447 505.9 H796 Q801 505.9 801 510.9 V535.5 Q801 540.5 796 540.5 H447 Q442 540.5 442 535.5 V526.4 L431.2 515.5 L439 514.8 Q442 514.5 442 510.9 Q442 505.9 447 505.9 Z" fill="#fff" stroke="#dedede" stroke-width="1"/><path d="M801.5 548.75 H1167.5 Q1172.5 548.75 1172.5 553.75 Q1172.5 557.35 1175.5 557.65 L1184.1 558.55 L1172.5 571.75 V578.75 Q1172.5 583.75 1167.5 583.75 H801.5 Q796.5 583.75 796.5 578.75 V553.75 Q796.5 548.75 801.5 548.75 Z" fill="#eef0fd" stroke="#dcdde6" stroke-width="1"/><path d="M801.5 591.75 H1167.5 Q1172.5 591.75 1172.5 596.75 Q1172.5 600.35 1175.5 600.65 L1184.1 601.55 L1172.5 614.75 V722.5 Q1172.5 727.5 1167.5 727.5 H801.5 Q796.5 727.5 796.5 722.5 V596.75 Q796.5 591.75 801.5 591.75 Z" fill="#eef0fd" stroke="#dcdde6" stroke-width="1"/></svg>
<span class="t" style="left:755.20px;top:258.77px;font-size:13.5px;color:#8e8e8e;letter-spacing:0.319px;-webkit-text-stroke:0.4px #8e8e8e;">17 Августа 2020</span>
<span class="t" style="left:451.80px;top:301.15px;font-size:14px;color:#333;letter-spacing:0.051px;">Добрый день! Пример сообщения с текстом.</span>
<span class="t" style="left:757.70px;top:301.15px;font-size:14px;color:#999;letter-spacing:-0.099px;">11:56</span>
<span class="t" style="left:805.60px;top:344.25px;font-size:14px;color:#333;letter-spacing:0.051px;">Добрый день! Пример сообщения с текстом.</span>
<span class="t" style="left:1111.90px;top:344.25px;font-size:14px;color:#999;letter-spacing:-0.099px;">11:56</span>
<svg class="a" style="left:1150px;top:345.5px;" width="16" height="12" viewBox="0 0 16 12"><path d="M1.3 6.3 L3.6 9.6 L10.3 2 M6.2 9.6 L14 2" fill="none" stroke="#2b45d6" stroke-width="1.25"/></svg>
<span class="t" style="left:781.05px;top:387.57px;font-size:13.5px;color:#8e8e8e;letter-spacing:0.260px;-webkit-text-stroke:0.4px #8e8e8e;">Сегодня</span>
<span class="t" style="left:669.20px;top:430.57px;font-size:13.5px;color:#8e8e8e;letter-spacing:0.339px;-webkit-text-stroke:0.4px #8e8e8e;">Чат завершён оператором Синдяев Игорь</span>
<span class="t" style="left:679.85px;top:473.17px;font-size:13.5px;color:#8e8e8e;letter-spacing:0.301px;-webkit-text-stroke:0.4px #8e8e8e;">Чат передан оператору Синдяев Игорь</span>
<span class="t" style="left:451.80px;top:515.65px;font-size:14px;color:#333;letter-spacing:0.051px;">Добрый день! Пример сообщения с текстом.</span>
<span class="t" style="left:757.70px;top:515.65px;font-size:14px;color:#999;letter-spacing:-0.099px;">11:56</span>
<span class="t" style="left:805.60px;top:559.00px;font-size:14px;color:#333;letter-spacing:0.051px;">Добрый день! Пример сообщения с текстом.</span>
<span class="t" style="left:1111.90px;top:559.00px;font-size:14px;color:#999;letter-spacing:-0.099px;">11:56</span>
<svg class="a" style="left:1150px;top:560.25px;" width="16" height="12" viewBox="0 0 16 12"><path d="M1.3 6.3 L3.6 9.6 L10.3 2 M6.2 9.6 L14 2" fill="none" stroke="#2b45d6" stroke-width="1.25"/></svg>
<svg class="a" style="left:806.25px;top:601.25px;" width="69.25" height="88.75" viewBox="0 0 69.25 88.75"><defs><clipPath id="imc"><rect width="69.25" height="88.75" rx="3"/></clipPath><linearGradient id="wg" x1="0.9" y1="0.1" x2="0.1" y2="0.95"><stop offset="0" stop-color="#a6d8c8"/><stop offset="0.3" stop-color="#7cc8b8"/><stop offset="0.6" stop-color="#4fb0a2"/><stop offset="0.85" stop-color="#2a8e86"/><stop offset="1" stop-color="#1a6e6a"/></linearGradient><filter id="imb" x="-5%" y="-5%" width="110%" height="110%"><feGaussianBlur stdDeviation="0.8"/></filter></defs><g clip-path="url(#imc)"><rect width="69.25" height="88.75" fill="url(#wg)"/><g filter="url(#imb)"><path d="M0 0 H69.25 V44 L62 40 L46 28 L30 16 L14 8 L0 5 Z" fill="#cfe4d8"/><path d="M0 0 H69.25 V40 L62 36 L46 24 L30 12 L14 4 L0 2 Z" fill="#d8c6a6"/><path d="M34 0 H69.25 V14 L60 11 L48 6 Z" fill="#7a8eb0"/><path d="M40 1 L46 3 L42 5 Z M52 2 L60 5 L54 8 Z M62 6 L69 8 L66 11 Z" fill="#e6ebf2"/><path d="M47 4 L52 7 L48 8 Z M58 0 L66 3 L62 5 Z" fill="#2e3444"/><rect x="60" y="13" width="8" height="3" fill="#d8603a"/><circle cx="16" cy="3" r="1" fill="#c08a70"/><circle cx="23" cy="22" r="1.2" fill="#c89070"/><circle cx="42" cy="36" r="1.4" fill="#c8a080"/><circle cx="48" cy="29" r="1.1" fill="#d09070"/><circle cx="56" cy="33" r="1" fill="#c08870"/><circle cx="34" cy="48" r="1.3" fill="#e8e0d8"/><circle cx="30" cy="70" r="1.5" fill="#e0d8d0"/><circle cx="50" cy="66" r="1.4" fill="#e8d8c8"/><circle cx="40" cy="75" r="1.2" fill="#6a5a60"/><circle cx="8" cy="42" r="1" fill="#c89080"/><circle cx="26" cy="32" r="1" fill="#d0b0a0"/></g></g></svg>
<span class="t" style="left:889.50px;top:638.65px;font-size:14px;color:#333;letter-spacing:-0.082px;-webkit-text-stroke:0.3px #333;">Image.png</span>
<span class="t" style="left:805.60px;top:703.15px;font-size:14px;color:#333;letter-spacing:0.051px;">Добрый день! Пример сообщения с текстом.</span>
<span class="t" style="left:1111.90px;top:703.15px;font-size:14px;color:#999;letter-spacing:-0.099px;">11:56</span>
<svg class="a" style="left:1150px;top:704.4px;" width="16" height="12" viewBox="0 0 16 12"><path d="M1.3 6.3 L3.6 9.6 L10.3 2 M6.2 9.6 L14 2" fill="none" stroke="#2b45d6" stroke-width="1.25"/></svg>
<span class="t" style="left:1219.30px;top:196.25px;font-size:14px;color:#999;letter-spacing:0.106px;">Контактная информация</span>
<div class="a" style="left:1408.00px;top:200px;width:3.2px;height:3.2px;border-radius:50%;background:#444"></div>
<div class="a" style="left:1414.65px;top:200px;width:3.2px;height:3.2px;border-radius:50%;background:#444"></div>
<div class="a" style="left:1421.30px;top:200px;width:3.2px;height:3.2px;border-radius:50%;background:#444"></div>
<svg class="a" style="left:1440px;top:192px;" width="20" height="20" viewBox="0 0 20 20"><path d="M3.8 3 L17.3 16.1 M17.3 3 L3.8 16.1" stroke="#555" stroke-width="1.4"/></svg>
<svg class="a" style="left:1216px;top:235px;" width="24" height="24" viewBox="0 0 24 24"><g transform="translate(-1216,-235)" fill="none" stroke="#bdbdbd" stroke-width="1.3"><path d="M1224.3 247.3 C1223.2 246 1223 244.5 1223 242.5 C1223 239.7 1224.4 238.3 1227 238.3 C1229.6 238.3 1231 239.7 1231 242.5 C1231 244.5 1230.8 246 1229.7 247.3 V248.3 C1233 249 1235 249.6 1235 251.5 V254.4 H1219.6 V251.5 C1219.6 249.6 1221 249 1224.3 248.3 Z"/></g></svg>
<svg class="a" style="left:1216px;top:268px;" width="24" height="24" viewBox="0 0 24 24"><g transform="translate(-1216,-268)"><path d="M1221 276.3 C1222.5 280 1225.5 283 1229.9 284.4" fill="none" stroke="#bcbcbc" stroke-width="1.5"/><path d="M1219.9 271.5 L1222.6 271.3 L1224.3 275.2 L1222.3 277.2 L1220.8 277.3 C1220.2 275 1219.9 273 1219.9 271.5 Z M1229.5 283.9 L1231.3 281.8 L1235.1 283.3 L1235.1 285.8 C1232.5 286 1230.8 285.1 1229.5 283.9 Z" fill="#bcbcbc"/></g></svg>
<svg class="a" style="left:1216px;top:300px;" width="24" height="24" viewBox="0 0 24 24"><g transform="translate(-1216,-300)" fill="none" stroke="#c4c4c4" stroke-width="1.3"><circle cx="1227.2" cy="310.7" r="4"/><path d="M1231.2 307.5 V312.5 C1231.2 314.2 1232.2 315 1233.3 315 C1235 315 1235.8 313 1235.8 310.7 C1235.8 306 1232 302.4 1227.4 302.4 C1222.7 302.4 1219 306.2 1219 310.8 C1219 315.5 1222.6 319.2 1227.4 319.2 H1229.4"/></g></svg>
<span class="t" style="left:1253.80px;top:239.45px;font-size:14px;color:#333;letter-spacing:-0.008px;">Шашков Валерьян</span>
<span class="t" style="left:1253.80px;top:271.25px;font-size:14px;color:#333;letter-spacing:-0.179px;">+7 (919) 992-86-67</span>
<span class="t" style="left:1253.80px;top:303.55px;font-size:14px;color:#c4c4c4;letter-spacing:-0.494px;">E-mail</span>
<div class="a" style="left:1201px;top:347.5px;width:275px;height:1px;background:#ebebeb"></div>
<span class="t" style="left:1219.25px;top:367.40px;font-size:14px;color:#333;letter-spacing:0.046px;">Дополнительная информация</span>
<svg class="a" style="left:1426px;top:366px;" width="16" height="14" viewBox="0 0 16 14"><path d="M3.5 10.5 L8.75 5.3 L14 10.5" fill="none" stroke="#bbb" stroke-width="1.3"/></svg>
<span class="t" style="left:1219.25px;top:404.82px;font-size:13.5px;color:#999;letter-spacing:0.197px;">Канал</span>
<span class="t" style="left:1219.25px;top:425.65px;font-size:14px;color:#333;letter-spacing:-0.015px;">Виджет сайта</span>
<span class="t" style="left:1219.25px;top:461.07px;font-size:13.5px;color:#999;letter-spacing:0.481px;">Источник входа</span>
<span class="t" style="left:1219.25px;top:481.90px;font-size:14px;color:#333;letter-spacing:0.144px;">Прямой заход uiscomcomcomccom...</span>
<span class="t" style="left:1219.25px;top:503.15px;font-size:14px;color:#1f3fd0;letter-spacing:-0.018px;">Перейти на страницу</span>
<span class="t" style="left:1219.25px;top:538.32px;font-size:13.5px;color:#999;letter-spacing:0.439px;">Рекламная кампания</span>
<span class="t" style="left:1219.25px;top:559.90px;font-size:14px;color:#333;letter-spacing:0.075px;">Посетители без рекламной камп...</span>
<span class="t" style="left:1219.25px;top:594.17px;font-size:13.5px;color:#999;letter-spacing:0.336px;">UTM-метки</span>
<span class="t" style="left:1219.25px;top:623.57px;font-size:13.5px;color:#999;letter-spacing:-0.035px;">Source</span>
<span class="t" style="left:1309.20px;top:623.15px;font-size:14px;color:#333;letter-spacing:0.012px;">google</span>
<span class="t" style="left:1219.25px;top:653.87px;font-size:13.5px;color:#999;letter-spacing:0.297px;">Medium</span>
<span class="t" style="left:1309.20px;top:653.45px;font-size:14px;color:#333;letter-spacing:0.257px;">cpc</span>
<span class="t" style="left:1219.25px;top:684.07px;font-size:13.5px;color:#999;letter-spacing:0.124px;">Campaign</span>
<span class="t" style="left:1309.20px;top:683.65px;font-size:14px;color:#333;letter-spacing:-0.221px;">com_spb_search_brand</span>
<span class="t" style="left:1219.25px;top:713.77px;font-size:13.5px;color:#999;letter-spacing:0.136px;">Content</span>
<span class="t" style="left:1309.20px;top:713.35px;font-size:14px;color:#333;letter-spacing:0.006px;">239758598103</span>
</div></body></html>
